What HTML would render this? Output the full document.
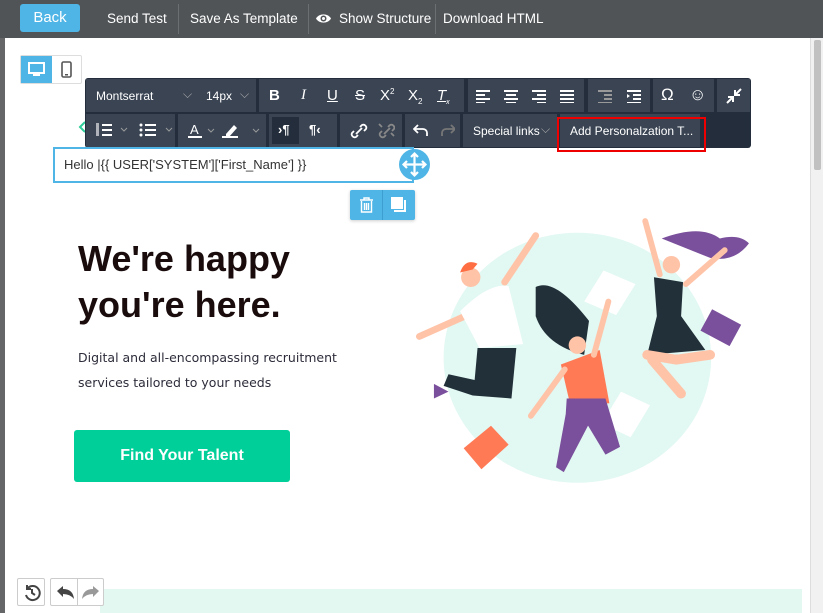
<!DOCTYPE html>
<html><head><meta charset="utf-8"><style>
*{margin:0;padding:0;box-sizing:border-box}
body{width:823px;height:613px;overflow:hidden;background:#fff;font-family:"Liberation Sans",sans-serif;position:relative}
.top{position:absolute;left:0;top:0;width:823px;height:38px;background:#505457;color:#fff;font-size:13.5px}
.top span{position:absolute;top:11px}
.back{position:absolute;left:20px;top:4px;width:60px;height:28px;background:#4fb5e6;border-radius:3px;text-align:center;line-height:28px;font-size:15px}
.sep{position:absolute;top:4px;width:1px;height:30px;background:#6b6f72}
.lstrip{position:absolute;left:0;top:38px;width:5px;height:575px;background:#646668}
.sb{position:absolute;left:810px;top:38px;width:13px;height:575px;background:#f1f1f1;border-left:1px solid #ddd}
.sb div{position:absolute;left:3px;top:2px;width:7px;height:130px;background:#c1c1c1;border-radius:2px}
.dev{position:absolute;left:20px;top:55px;width:62px;height:29px;border:1px solid #ddd;border-radius:2px;background:#fff}
.tb{position:absolute;left:85px;top:78px;width:666px;height:70px;background:#232d3b;border-radius:3px}
.g{position:absolute;background:#3a4453;color:#fff;font-size:12px}
.tb svg{position:absolute}
.edit{position:absolute;left:53px;top:147px;width:361px;height:36px;border:2px solid #4fb5e6;font-size:13px;color:#333;line-height:32px;padding-left:9px;background:#fff}
h1{position:absolute;left:78px;top:236px;font-family:"Liberation Sans",sans-serif;font-size:36px;line-height:46px;font-weight:bold;color:#1a0c0c}
.p{position:absolute;left:78px;top:345px;font-family:"DejaVu Sans",sans-serif;font-size:12.5px;line-height:25px;color:#2c2c3a}
.btn{position:absolute;left:74px;top:430px;width:216px;height:52px;background:#00cf9a;border-radius:3px;color:#fff;font-family:"Liberation Sans",sans-serif;font-weight:bold;font-size:16px;text-align:center;line-height:51px}
.sq{position:absolute;background:#fff;border:1px solid #ccc;border-radius:2px}
</style></head><body>
<div class="top">
<div class="back">Back</div>
<span style="left:107px">Send Test</span>
<div class="sep" style="left:178px"></div>
<span style="left:190px">Save As Template</span>
<div class="sep" style="left:308px"></div>
<svg style="position:absolute;left:315px;top:12px" width="17" height="13" viewBox="0 0 17 13"><path d="M1 6.5C4 1 13 1 16 6.5 13 12 4 12 1 6.5Z" fill="#fff"/><circle cx="8.5" cy="6.5" r="3" fill="#505457"/><circle cx="8.5" cy="6.5" r="1.5" fill="#fff"/></svg>
<span style="left:339px">Show Structure</span>
<div class="sep" style="left:435px"></div>
<span style="left:443px">Download HTML</span>
</div>
<div class="lstrip"></div>
<div class="sb"><div></div></div>
<div class="dev"><div style="position:absolute;left:0;top:0;width:31px;height:27px;background:#4fb5e6"></div>
<svg style="position:absolute;left:7px;top:6px" width="17" height="15"><rect x="1" y="1" width="15" height="10" fill="none" stroke="#fff" stroke-width="2"/><rect x="5" y="12" width="7" height="2" fill="#fff"/></svg>
<svg style="position:absolute;left:40px;top:5px" width="11" height="17"><rect x="1" y="1" width="9" height="15" rx="1.5" fill="none" stroke="#555" stroke-width="1.6"/><rect x="4" y="13" width="3" height="1.5" fill="#555"/></svg></div>
<svg style="position:absolute;left:78px;top:120px" width="10" height="14"><path d="M7 2L2 7l5 5" fill="none" stroke="#2ecc9a" stroke-width="2"/></svg>
<div class="tb">
<div class="g" style="left:1px;top:1px;width:170px;height:33px"><span style="position:absolute;left:10px;top:10px">Montserrat</span><span style="position:absolute;left:97px;top:8px;color:#aaa">⌵</span><span style="position:absolute;left:120px;top:10px">14px</span><span style="position:absolute;left:154px;top:8px;color:#aaa">⌵</span></div>
<div class="g" style="left:174px;top:1px;width:205px;height:33px;font-size:15px"><b style="position:absolute;left:10px;top:8px">B</b><i style="position:absolute;left:42px;top:8px;font-family:'Liberation Serif'">I</i><u style="position:absolute;left:68px;top:8px">U</u><s style="position:absolute;left:96px;top:8px">S</s><span style="position:absolute;left:121px;top:8px">X<sup style="font-size:8px">2</sup></span><span style="position:absolute;left:149px;top:8px">X<sub style="font-size:8px">2</sub></span><i style="position:absolute;left:178px;top:8px;text-decoration:underline">T<sub style="font-size:7px">x</sub></i></div>
<div class="g" style="left:383px;top:1px;width:116px;height:33px"><svg style="left:8px;top:10px" width="100" height="14"><g fill="#fff"><rect x="0" y="1" width="14" height="2"/><rect x="0" y="5" width="9" height="2"/><rect x="0" y="9" width="14" height="2"/><rect x="0" y="13" width="9" height="1.5"/><rect x="28" y="1" width="14" height="2"/><rect x="30" y="5" width="10" height="2"/><rect x="28" y="9" width="14" height="2"/><rect x="30" y="13" width="10" height="1.5"/><rect x="56" y="1" width="14" height="2"/><rect x="61" y="5" width="9" height="2"/><rect x="56" y="9" width="14" height="2"/><rect x="61" y="13" width="9" height="1.5"/><rect x="84" y="1" width="14" height="2"/><rect x="84" y="5" width="14" height="2"/><rect x="84" y="9" width="14" height="2"/><rect x="84" y="13" width="14" height="1.5"/></g></svg></div>
<div class="g" style="left:503px;top:1px;width:62px;height:33px"><svg style="left:10px;top:10px" width="45" height="14"><g fill="#999"><rect x="0" y="1" width="14" height="2"/><rect x="6" y="5" width="8" height="2"/><rect x="6" y="9" width="8" height="2"/><rect x="0" y="13" width="14" height="1.5"/></g><g fill="#fff"><rect x="29" y="1" width="14" height="2"/><rect x="35" y="5" width="8" height="2"/><rect x="35" y="9" width="8" height="2"/><rect x="29" y="13" width="14" height="1.5"/><path d="M29 5l3 2-3 2z"/></g></svg></div>
<div class="g" style="left:568px;top:1px;width:61px;height:33px;font-size:17px"><span style="position:absolute;left:8px;top:6px">Ω</span><span style="position:absolute;left:36px;top:6px">☺</span></div>
<div class="g" style="left:632px;top:1px;width:33px;height:33px"><svg style="left:8px;top:8px" width="18" height="18"><path d="M2 16l6-6M3 10h5v5M16 2l-6 6M10 3v5h5" stroke="#fff" stroke-width="2" fill="none"/></svg></div>
<div class="g" style="left:1px;top:36px;width:89px;height:33px"><svg style="left:10px;top:9px" width="80" height="15"><g fill="#fff"><rect x="6" y="1" width="10" height="2"/><rect x="6" y="6" width="10" height="2"/><rect x="6" y="11" width="10" height="2"/><rect x="0" y="0" width="3" height="13" opacity=".6"/><circle cx="45" cy="2" r="1.5"/><circle cx="45" cy="7" r="1.5"/><circle cx="45" cy="12" r="1.5"/><rect x="49" y="1" width="11" height="2"/><rect x="49" y="6" width="11" height="2"/><rect x="49" y="11" width="11" height="2"/></g><path d="M25 5l3 3 3-3M70 5l3 3 3-3" stroke="#999" fill="none"/></svg></div>
<div class="g" style="left:93px;top:36px;width:88px;height:33px"><svg style="left:10px;top:8px" width="75" height="17"><text x="2" y="12" fill="#fff" font-size="13" font-family="Liberation Sans">A</text><rect x="0" y="14" width="14" height="2" fill="#fff"/><path d="M20 7l3 3 3-3M65 7l3 3 3-3" stroke="#999" fill="none"/><path d="M38 12l8-9 3 3-8 9h-3z" fill="#fff"/><rect x="34" y="14" width="16" height="2" fill="#fff"/></svg></div>
<div class="g" style="left:184px;top:36px;width:68px;height:33px;background:#3a4453"><div style="position:absolute;left:3px;top:3px;width:27px;height:27px;background:#232d3b"></div><span style="position:absolute;left:9px;top:8px;font-size:13px;font-weight:bold">›¶</span><span style="position:absolute;left:40px;top:8px;font-size:13px;font-weight:bold">¶‹</span></div>
<div class="g" style="left:255px;top:36px;width:62px;height:33px"><svg style="left:10px;top:8px" width="45" height="18"><path d="M6 12l6-6M4 9l-2 2a3 3 0 004 4l2-2M10 5l2-2a3 3 0 014 4l-2 2" stroke="#fff" stroke-width="1.8" fill="none"/><path d="M34 12l6-6M32 9l-2 2a3 3 0 004 4l2-2M38 5l2-2a3 3 0 014 4l-2 2M29 2l3 3M44 14l-3-3" stroke="#888" stroke-width="1.8" fill="none"/></svg></div>
<div class="g" style="left:320px;top:36px;width:55px;height:33px"><svg style="left:8px;top:9px" width="42" height="15"><path d="M5 2L1 6l4 4M1 6h9a4 4 0 014 4v3" stroke="#fff" stroke-width="1.8" fill="none"/><path d="M38 2l4 4-4 4M42 6h-9a4 4 0 00-4 4v3" stroke="#777" stroke-width="1.8" fill="none"/></svg></div>
<div class="g" style="left:378px;top:36px;width:94px;height:33px"><span style="position:absolute;left:10px;top:10px">Special links</span><span style="position:absolute;left:78px;top:8px;color:#aaa">⌵</span></div>
<div class="g" style="left:475px;top:36px;width:140px;height:33px"><span style="position:absolute;left:10px;top:10px">Add Personalzation T...</span></div>
</div>
<div style="position:absolute;left:557px;top:117px;width:149px;height:35px;border:2px solid #e00"></div>
<div class="edit">Hello |{{ USER['SYSTEM']['First_Name'] }}</div>
<div style="position:absolute;left:399px;top:149px;width:31px;height:31px;border-radius:50%;background:#4fb5e6"><svg width="31" height="31"><path d="M15.5 5v21M5 15.5h21M12 8l3.5-3.5L19 8M12 23l3.5 3.5L19 23M8 12l-3.5 3.5L8 19M23 12l3.5 3.5L23 19" stroke="#fff" stroke-width="2.2" fill="none"/></svg></div>
<div style="position:absolute;left:350px;top:190px;width:65px;height:30px;background:#4fb5e6;border-radius:2px;box-shadow:0 1px 3px rgba(0,0,0,.2)"><div style="position:absolute;left:32px;top:0;width:1px;height:30px;background:#3c9fcf"></div>
<svg style="position:absolute;left:8px;top:6px" width="17" height="18"><path d="M2 4h13M6 4V2h5v2M3.5 5v11h10V5M6.5 7v7M8.5 7v7M10.5 7v7" stroke="#fff" stroke-width="1.4" fill="none"/></svg>
<svg style="position:absolute;left:40px;top:6px" width="18" height="18"><rect x="1" y="1" width="12" height="12" fill="#fff"/><path d="M15 4v11H4" stroke="#fff" stroke-width="2" fill="none"/></svg></div>
<h1>We're happy<br>you're here.</h1>
<div class="p">Digital and all-encompassing recruitment<br>services tailored to your needs</div>
<div class="btn">Find Your Talent</div>
<svg style="position:absolute;left:400px;top:200px" width="410" height="300" viewBox="0 0 423 300">
<ellipse cx="183" cy="158" rx="138" ry="129" fill="#e2f8f2"/>
<path d="M210 68l33 14-20 32-33-14z" fill="#fff"/><path d="M228 193l30 14-20 33-30-14z" fill="#fff"/>
<path d="M68 240l36 -6 6 26-37 8z" fill="#ff7a55" transform="rotate(-30 88 250)"/>
<path d="M322 108l30 16-12 22-30-16z" fill="#7a4f9c"/>
<path d="M20 136l45-20 M108 80l32-48" stroke="#ffc3a8" stroke-width="7" stroke-linecap="round"/>
<path d="M62 110q30-30 50-26l15 60-45 4z" fill="#fff"/>
<path d="M80 148h40l-5 52-40-3-30-10 5-12 27 6z" fill="#223039"/>
<path d="M35 185l15 8-15 7z" fill="#7a4f9c"/>
<circle cx="73" cy="75" r="10" fill="#ffc3a8"/><path d="M62 70q5-15 18-9l-5 6z" fill="#ff6d43"/>
<path d="M140 85q20-10 55 35l-5 35q-40-10-50-40z" fill="#223039"/>
<circle cx="183" cy="145" r="9" fill="#ffc3a8"/>
<path d="M166 165l40-15 10 55-40 3z" fill="#ff7a55"/>
<path d="M172 200h40l15 50-15 8-18-30-25 48-8-5 10-55z" fill="#7a4f9c"/>
<path d="M200 155l15-55M170 170l-35 48" stroke="#ffc3a8" stroke-width="6" stroke-linecap="round"/>
<path d="M270 35q40-15 60 0 20-5 30 5-15 20-40 15z" fill="#7a4f9c"/>
<circle cx="280" cy="62" r="9" fill="#ffc3a8"/>
<path d="M262 75l30 5-2 35 25 35-60 5 10-40z" fill="#223039"/>
<path d="M255 155l30 5 35-5M260 160l30 35" stroke="#ffc3a8" stroke-width="10" stroke-linecap="round"/>
<path d="M268 72l-15-55M295 82l40-35" stroke="#ffc3a8" stroke-width="6" stroke-linecap="round"/>
</svg>
<div style="position:absolute;left:100px;top:589px;width:702px;height:24px;background:#e4f8f2"></div>
<div class="sq" style="left:17px;top:578px;width:28px;height:28px"><svg style="position:absolute;left:5px;top:5px" width="18" height="18"><path d="M4 5a7 7 0 11-1 6M4 1v4h4M9 5v4l3 2" stroke="#444" stroke-width="2" fill="none"/></svg></div>
<div class="sq" style="left:50px;top:578px;width:54px;height:28px"><div style="position:absolute;left:26px;top:0;width:1px;height:26px;background:#ccc"></div><svg style="position:absolute;left:4px;top:6px" width="46" height="16"><path d="M2 6l6-5v3q10 0 11 10-4-5-11-5v3z" fill="#444"/><path d="M44 6l-6-5v3q-10 0-11 10 4-5 11-5v3z" fill="#999"/></svg></div>
</body></html>
